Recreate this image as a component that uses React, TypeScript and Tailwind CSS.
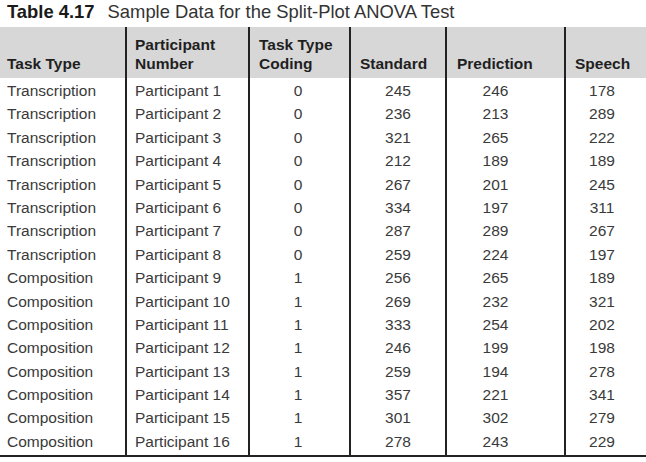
import React from "react";

const rows: [string, string, string, string, string, string][] = [
  ["Transcription", "Participant 1", "0", "245", "246", "178"],
  ["Transcription", "Participant 2", "0", "236", "213", "289"],
  ["Transcription", "Participant 3", "0", "321", "265", "222"],
  ["Transcription", "Participant 4", "0", "212", "189", "189"],
  ["Transcription", "Participant 5", "0", "267", "201", "245"],
  ["Transcription", "Participant 6", "0", "334", "197", "311"],
  ["Transcription", "Participant 7", "0", "287", "289", "267"],
  ["Transcription", "Participant 8", "0", "259", "224", "197"],
  ["Composition", "Participant 9", "1", "256", "265", "189"],
  ["Composition", "Participant 10", "1", "269", "232", "321"],
  ["Composition", "Participant 11", "1", "333", "254", "202"],
  ["Composition", "Participant 12", "1", "246", "199", "198"],
  ["Composition", "Participant 13", "1", "259", "194", "278"],
  ["Composition", "Participant 14", "1", "357", "221", "341"],
  ["Composition", "Participant 15", "1", "301", "302", "279"],
  ["Composition", "Participant 16", "1", "278", "243", "229"],
];

type Col = {
  header: string[];
  width: string;
  border: boolean;
  headPad: string;
  bodyClass: string;
};

const cols: Col[] = [
  { header: ["Task Type"], width: "w-[125px]", border: false, headPad: "pl-[7px]", bodyClass: "pl-[7px] text-left" },
  { header: ["Participant", "Number"], width: "w-[123px]", border: true, headPad: "pl-2", bodyClass: "pl-2 text-left" },
  { header: ["Task Type", "Coding"], width: "w-[101px]", border: true, headPad: "pl-[9px]", bodyClass: "text-center pr-[3px]" },
  { header: ["Standard"], width: "w-[96px]", border: true, headPad: "pl-[9px]", bodyClass: "text-center" },
  { header: ["Prediction"], width: "w-[119px]", border: true, headPad: "pl-[10px]", bodyClass: "text-center pr-5" },
  { header: ["Speech"], width: "w-[82px]", border: true, headPad: "pl-[9px]", bodyClass: "text-center pr-2" },
];

export default function App() {
  return (
    <div
      className="w-[646px] h-[462px] bg-white overflow-hidden"
      style={{ fontFamily: '"Liberation Sans", Arial, sans-serif' }}
    >
      <div className="h-[24px] leading-[24px] text-[18.4px] text-[#1a1a1a] pl-[7px] mb-[3px] whitespace-nowrap">
        <span className="font-bold">Table 4.17</span>
        <span className="ml-[13px] text-[#333]">Sample Data for the Split-Plot ANOVA Test</span>
      </div>
      <div className="flex border-b-2 border-[#222]">
        {cols.map((c, ci) => (
          <div
            key={ci}
            className={`${c.width} flex flex-col ${c.border ? "border-l-2 border-[#222]" : ""}`}
          >
            <div
              className={`h-[51px] bg-[#d7d7d7] flex flex-col justify-end pb-[5px] ${c.headPad} text-[15.5px] leading-[19px] font-bold text-[#1f1f1f] whitespace-nowrap`}
            >
              {c.header.map((h, hi) => (
                <div key={hi}>{h}</div>
              ))}
            </div>
            <div className="pt-[1px] pb-[2px]">
              {rows.map((r, ri) => (
                <div
                  key={ri}
                  className={`h-[23.4px] leading-[23.4px] text-[15.5px] text-[#3a3a3a] whitespace-nowrap ${c.bodyClass}`}
                >
                  {r[ci]}
                </div>
              ))}
            </div>
          </div>
        ))}
      </div>
    </div>
  );
}
